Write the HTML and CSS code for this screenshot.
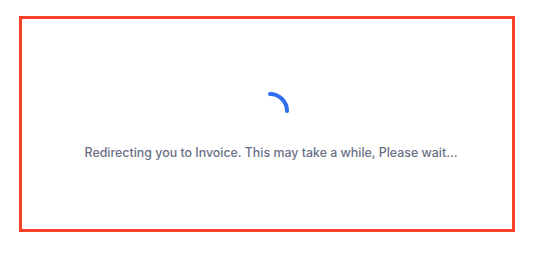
FILE: index.html
```html
<!DOCTYPE html>
<html lang="en">

<head>
    <meta charset="UTF-8">
    <meta name="viewport" content="width=device-width, initial-scale=1.0">
    <title>Redirecting</title>
    <link rel="stylesheet" href="styles.css">
</head>

<body>
    <main class="redirect-card">
        <svg class="spinner" width="40" height="40" viewBox="0 0 40 40">
            <path d="M19 3 A17 17 0 0 1 36 20" fill="none" stroke="#2f6cf0" stroke-width="4" stroke-linecap="round"/>
        </svg>
        <p class="redirect-text">Redirecting you to Invoice. This may take a while, Please wait...</p>
    </main>
</body>

</html>
```

FILE: styles.css
```css
body {
    font-family: Inter, "Noto Sans", sans-serif;
    background: white;
    margin: 0;
    padding: 0;
}

.redirect-card {
    box-sizing: border-box;
    width: 496px;
    height: 216px;
    margin: 16px 0 0 19px;
    border: 3px solid #f5412a;
    padding: 72px 0 0 8px;
    display: flex;
    flex-direction: column;
    align-items: center;
}

.spinner {
    display: block;
}

.redirect-text {
    margin: 13px 0 0;
    font-size: 12.4px;
    line-height: 17px;
    font-weight: 500;
    color: #6a7086;
}
```
